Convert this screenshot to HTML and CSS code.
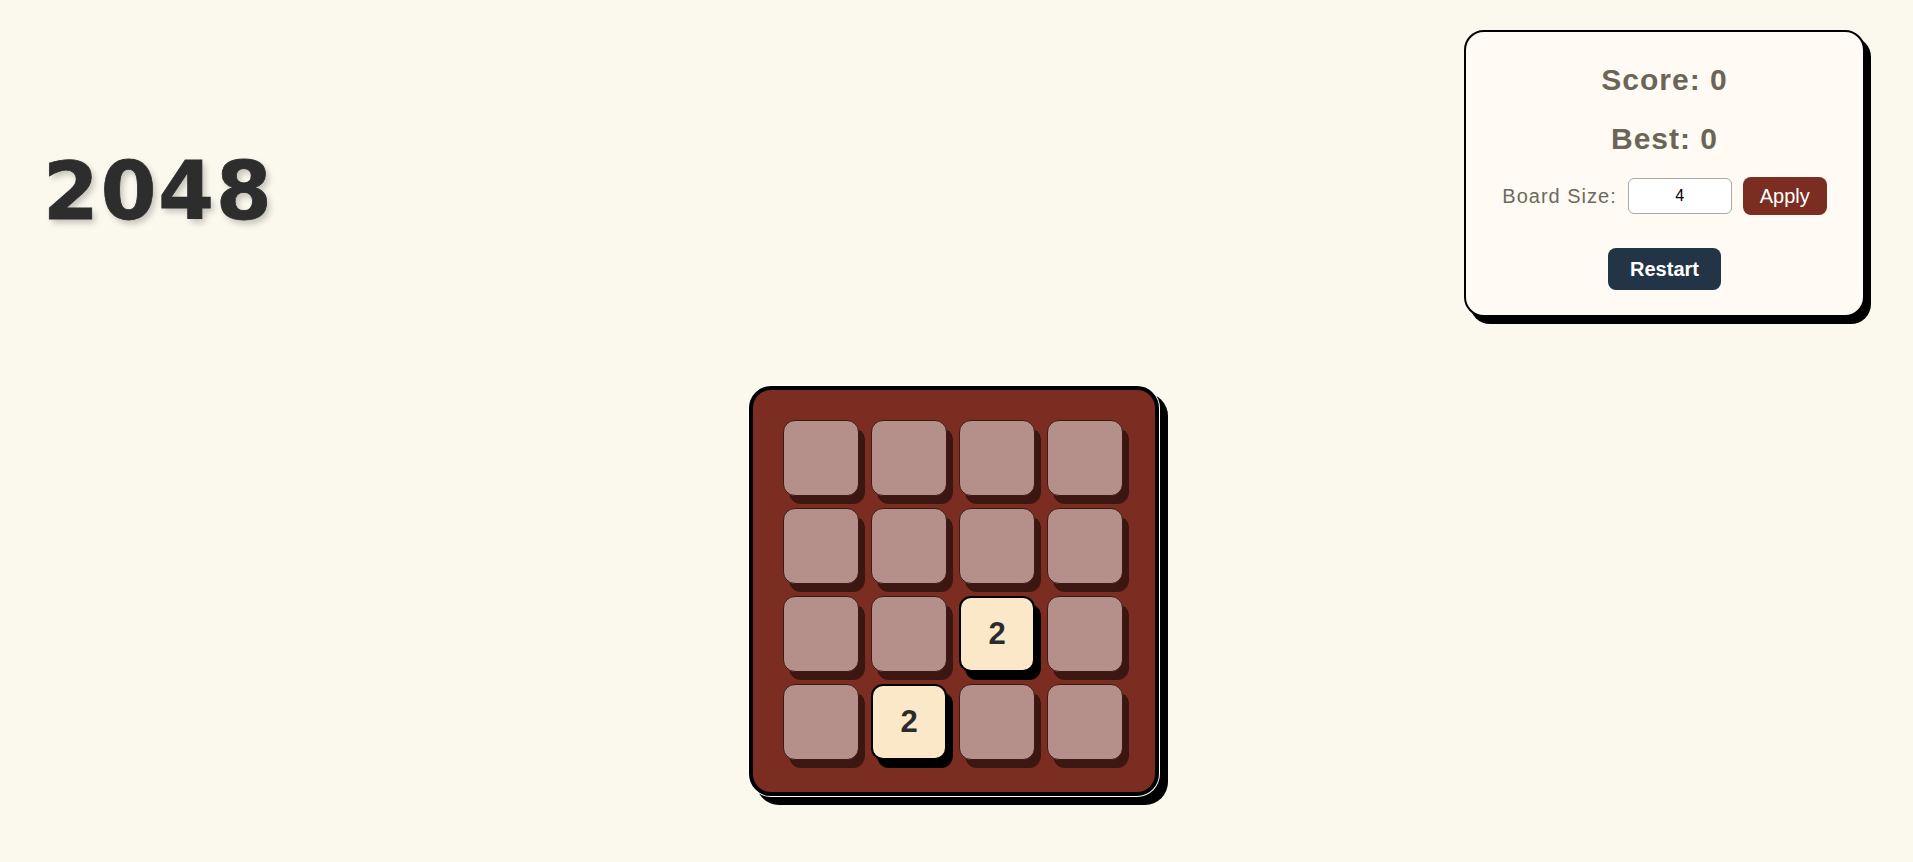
FILE: index.html
```html
<!DOCTYPE html>
<html lang="en">
<head>
<meta charset="utf-8">
<title>2048</title>
<link rel="stylesheet" href="styles.css">
</head>
<body>
  <header class="header">
    <h1 class="title">2048</h1>
    <section class="panel">
      <h2 class="stat">Score: 0</h2>
      <h2 class="stat stat-best">Best: 0</h2>
      <div class="size-row">
        <label class="size-label" for="size">Board Size:</label>
        <input class="size-input" id="size" type="number" value="4">
        <button class="btn btn-apply">Apply</button>
      </div>
      <button class="btn btn-restart">Restart</button>
    </section>
  </header>
  <main class="board-wrap">
    <div class="board">
      <div class="tile"></div><div class="tile"></div><div class="tile"></div><div class="tile"></div>
      <div class="tile"></div><div class="tile"></div><div class="tile"></div><div class="tile"></div>
      <div class="tile"></div><div class="tile"></div><div class="tile tile-2">2</div><div class="tile"></div>
      <div class="tile"></div><div class="tile tile-2">2</div><div class="tile"></div><div class="tile"></div>
    </div>
  </main>
</body>
</html>
```
FILE: styles.css
```css
* { box-sizing: border-box; }
html, body { margin: 0; }
body {
  background: #fbf8ee;
  font-family: "Liberation Sans", Arial, sans-serif;
  letter-spacing: 1px;
  padding: 30px 48px 0 48px;
  min-height: 862px;
}
.header {
  display: flex;
  justify-content: space-between;
  align-items: flex-start;
}
.title {
  margin: 122px 0 0 -5px;
  font-family: "DejaVu Sans", sans-serif;
  font-weight: bold;
  font-size: 80px;
  line-height: 80px;
  letter-spacing: 2px;
  color: #2d2d2d;
  -webkit-text-stroke: 0.8px #2d2d2d;
  text-shadow: 3px 4px 6px rgba(0, 0, 0, 0.22);
}
.panel {
  width: 401px;
  height: 287px;
  border: 2px solid #000;
  border-radius: 20px;
  background: #fffaf3;
  box-shadow: 6px 7px 0 #000;
  padding: 31px 0 25px;
  display: flex;
  flex-direction: column;
  align-items: center;
}
.stat {
  margin: 0;
  font-size: 30px;
  line-height: 34px;
  font-weight: bold;
  color: #6b6557;
}
.stat-best { margin-top: 25px; }
.size-row {
  margin-top: 21px;
  height: 38px;
  display: flex;
  align-items: center;
  gap: 11px;
}
.size-label {
  font-size: 20px;
  color: #6e695e;
}
.size-input {
  width: 104px;
  height: 36px;
  border: 1px solid #a9a9a9;
  border-radius: 6px;
  background: #fff;
  text-align: center;
  font-family: "Liberation Sans", Arial, sans-serif;
  font-size: 16px;
  color: #000;
  padding: 0;
  -moz-appearance: textfield;
}
.size-input::-webkit-inner-spin-button,
.size-input::-webkit-outer-spin-button { -webkit-appearance: none; margin: 0; }
.btn {
  border: none;
  color: #fff;
  font-family: "Liberation Sans", Arial, sans-serif;
  padding: 0;
  cursor: pointer;
}
.btn-apply {
  width: 84px;
  height: 38px;
  border-radius: 8px;
  background: #7b2d22;
  font-size: 20px;
}
.btn-restart {
  margin-top: 33px;
  width: 113px;
  height: 42px;
  border-radius: 8px;
  background: #233447;
  font-size: 20px;
  font-weight: bold;
}
.board-wrap {
  display: flex;
  justify-content: center;
  margin-top: 69px;
  padding-right: 5px;
}
.board {
  width: 410px;
  height: 410px;
  border: 4px solid #000;
  border-radius: 22px;
  background: #7b2d22;
  box-shadow: 0 0 0 1px #fff, 8px 8px 0 1px #000;
  padding: 30px;
  display: grid;
  grid-template-columns: repeat(4, 76px);
  grid-template-rows: repeat(4, 76px);
  gap: 12px;
}
.tile {
  border: 1px solid #3f1a14;
  border-radius: 12px;
  background: #b58f89;
  box-shadow: 6px 8px 0 #3c1712;
  display: flex;
  align-items: center;
  justify-content: center;
}
.tile-2 {
  background: #fae8c8;
  border: 2px solid #000;
  box-shadow: 6px 8px 0 #000;
  font-size: 31px;
  font-weight: bold;
  letter-spacing: 0;
  color: #2b2b2b;
}
```
